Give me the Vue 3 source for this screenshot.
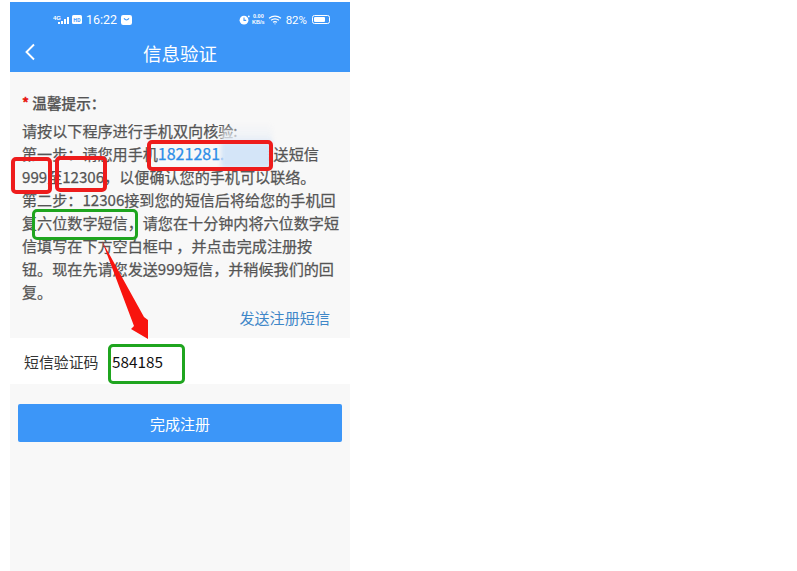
<script setup>
const lines = [
  '第二步：12306接到您的短信后将给您的手机回',
  '复六位数字短信，请您在十分钟内将六位数字短',
  '信填写在下方空白框中 ，并点击完成注册按',
  '钮。现在先请您发送999短信，并稍候我们的回',
  '复。'
]
</script>

<template>
  <div class="page">
    <div class="phone">
      <header class="head">
        <div class="status">
          <div class="st-left">
            <svg class="net" width="18" height="10" viewBox="0 0 18 10">
              <text x="0" y="5" font-size="6" font-weight="700" fill="#fff" font-family="Liberation Sans">4G</text>
              <rect x="5" y="7" width="2" height="2" fill="#fff" />
              <rect x="8" y="6" width="2" height="3" fill="#fff" />
              <rect x="11" y="4" width="2" height="5" fill="#fff" />
              <rect x="14" y="2" width="2" height="7" fill="#fff" />
            </svg>
            <span class="hd">HD</span>
            <span class="time">16:22</span>
            <svg width="11" height="10" viewBox="0 0 11 10">
              <rect width="11" height="10" rx="2.2" fill="#fff" />
              <path d="M3 3.4 Q5.5 6.6 8 3.4" fill="none" stroke="#3c96f8" stroke-width="1.2" />
            </svg>
          </div>
          <div class="st-right">
            <svg width="11" height="10" viewBox="0 0 11 10">
              <circle cx="5" cy="5.2" r="4.4" fill="#fff" />
              <path d="M5 2.6V5.4H7.2" fill="none" stroke="#3c96f8" stroke-width="1.1" />
              <circle cx="9.8" cy="1.4" r="0.9" fill="#fff" />
            </svg>
            <span class="speed">0.00<br />KB/s</span>
            <svg width="14" height="10" viewBox="0 0 14 10" fill="none" stroke="#fff" stroke-width="1.1">
              <path d="M1 3.2Q7 -1 13 3.2" />
              <path d="M3 5.3Q7 2.4 11 5.3" />
              <path d="M5 7.3Q7 5.9 9 7.3" />
              <circle cx="7" cy="8.8" r="0.6" fill="#fff" stroke="none" />
            </svg>
            <span class="pct">82%</span>
            <span class="batt"><span class="batt-fill"></span></span>
          </div>
        </div>
        <div class="nav">
          <svg class="back" width="12" height="18" viewBox="0 0 12 18">
            <path d="M10 1.5 2.5 9 10 16.5" fill="none" stroke="#fff" stroke-width="1.9" />
          </svg>
          <h1 class="title">信息验证</h1>
        </div>
      </header>

      <section class="notice">
        <p class="tip"><span class="star">*</span> 温馨提示：</p>
        <div class="body">
          <p>请按以下程序进行手机双向核验:</p>
          <p>第一步：请您用手机<span class="num">1821281.</span><span class="gap"></span>发送短信</p>
          <p>999至12306，以便确认您的手机可以联络。</p>
          <p v-for="l in lines" :key="l">{{ l }}</p>
        </div>
        <a class="send">发送注册短信</a>
      </section>

      <div class="code-row">
        <span class="code-label">短信验证码</span>
        <span class="code-value">584185</span>
      </div>

      <div class="btn-wrap">
        <button class="btn">完成注册</button>
      </div>

      <span class="smudge"></span>
      <span class="mark red m1"></span>
      <span class="mark red m2"></span>
      <span class="mark red m3"></span>
      <span class="mark green m4"></span>
      <span class="mark green m5"></span>
      <svg class="arrow" width="50" height="100" viewBox="0 0 50 100">
        <path d="M2 0 44 76 48 79 48 98 31 88 34 85Z" fill="#f8140e" />
      </svg>
    </div>
  </div>
</template>

<style scoped>
.page {
  width: 797px;
  height: 571px;
  background: #fff;
  overflow: hidden;
  padding: 2px 0 0 10px;
  box-sizing: border-box;
  font-family: "Noto Sans CJK SC", "Noto Sans", sans-serif;
}
.phone {
  position: relative;
  width: 340px;
  height: 569px;
  background: #f8f8f8;
}
.head {
  background: #3c96f8;
  height: 70px;
  color: #fff;
}
.status {
  height: 32px;
  display: flex;
  justify-content: space-between;
  align-items: center;
  padding: 3px 20px 0 43px;
  box-sizing: border-box;
}
.st-left, .st-right {
  display: flex;
  align-items: center;
}
.net { margin-right: 1px; }
.hd {
  width: 10px;
  height: 9px;
  background: #fff;
  color: #3c96f8;
  border-radius: 1.5px;
  font-size: 5px;
  line-height: 9px;
  text-align: center;
  font-weight: 700;
}
.time {
  font-family: Roboto, sans-serif;
  font-size: 12.5px;
  margin: 0 4px;
}
.speed {
  font-family: "Liberation Sans", sans-serif;
  font-size: 5.5px;
  line-height: 5.5px;
  text-align: center;
  margin: 0 3px 0 2px;
  font-weight: 700;
}
.pct {
  font-family: Roboto, sans-serif;
  font-size: 11.5px;
  margin: 0 5px 0 4px;
}
.batt {
  width: 18px;
  height: 9px;
  border: 1px solid #fff;
  border-radius: 2.5px;
  box-sizing: border-box;
  padding: 1px;
  display: flex;
}
.batt-fill {
  width: 82%;
  background: #fff;
  border-radius: 1px;
}
.nav {
  position: relative;
  height: 38px;
  display: flex;
  align-items: center;
  justify-content: center;
}
.back {
  position: absolute;
  left: 14px;
  top: 9px;
}
.title {
  margin: 0;
  font-size: 18.5px;
  font-weight: 400;
  line-height: 40px;
}
.notice {
  padding: 19px 12px 0;
  color: #555;
  font-size: 15.1px;
  -webkit-text-stroke: 0.25px #555;
}
.tip {
  margin: 0 0 4px;
  line-height: 24px;
  font-weight: 500;
  font-size: 14.6px;
}
.star {
  color: #e8150f;
  -webkit-text-stroke: 0.5px #e8150f;
}
.body p {
  margin: 0;
  line-height: 23px;
  white-space: nowrap;
  font-weight: 400;
}
.num {
  color: #2d8ee8;
  font-size: 16px;
  -webkit-text-stroke: 0.25px #2d8ee8;
}
.gap {
  display: inline-block;
  width: 34px;
}
.send {
  display: block;
  text-align: right;
  color: #3f87c8;
  font-size: 15.1px;
  line-height: 22px;
  padding: 3px 8px 0 0;
  -webkit-text-stroke: 0;
}
.code-row {
  margin-top: 10px;
  height: 46px;
  background: #fff;
  display: flex;
  align-items: center;
  padding-left: 14px;
}
.code-label {
  font-size: 14.9px;
  color: #333;
  width: 88px;
}
.code-value {
  font-size: 15.3px;
  color: #111;
}
.btn-wrap {
  padding: 20px 8px 0;
}
.btn {
  display: block;
  width: 100%;
  height: 38px;
  border: 0;
  border-radius: 2px;
  background: #3c96f8;
  color: #fff;
  font-size: 15px;
  font-family: inherit;
}
.smudge {
  position: absolute;
  left: 211px;
  top: 122px;
  width: 51px;
  height: 44px;
  background: linear-gradient(180deg, rgba(236, 240, 246, 0) 0%, rgba(236, 240, 246, 0.8) 30%, #d4e5f8 50%, #d4e5f8 100%);
  filter: blur(2px);
}
.mark {
  position: absolute;
  box-sizing: border-box;
  border-radius: 5px;
  border-style: solid;
}
.red {
  border-color: #ee1c1c;
  border-width: 4px;
}
.green {
  border-color: #1fa51f;
  border-width: 3.5px;
}
.m1 { left: 137px; top: 138px; width: 126px; height: 31px; }
.m2 { left: 1px; top: 155px; width: 41px; height: 37px; }
.m3 { left: 45px; top: 154px; width: 52px; height: 36px; }
.m4 { left: 22px; top: 207px; width: 106px; height: 31px; }
.m5 { left: 98px; top: 342px; width: 77px; height: 40px; }
.arrow {
  position: absolute;
  left: 90px;
  top: 239px;
}
</style>
